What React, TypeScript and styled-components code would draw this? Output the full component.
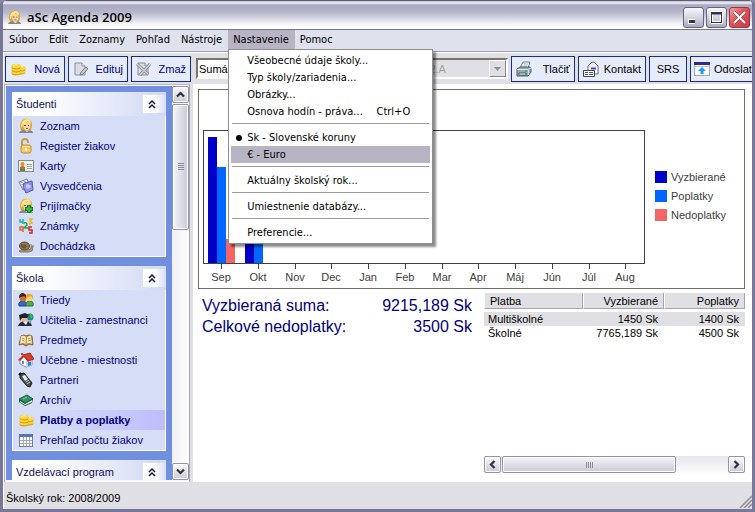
import React from "react";
import styled, { createGlobalStyle, css } from "styled-components";

const navy = "#00007b";
const face = "#e0dfe3";
const sans = '"Liberation Sans", Arial, sans-serif';
const menuFont = '"DejaVu Sans Condensed", "DejaVu Sans", sans-serif';

const GlobalStyle = createGlobalStyle`
  * { box-sizing: border-box; }
  html, body { margin: 0; height: 100%; }
  body { background: #8c8ca8; font: 11px/14px ${sans}; color: #000; overflow: hidden; }
  button, select { font: inherit; color: inherit; margin: 0; }
  svg { display: block; flex: none; }
`;

const Window = styled.div`
  display: flex;
  flex-direction: column;
  height: 100vh;
  border: solid #77779a;
  border-width: 0 3px 3px;
  border-radius: 6px 6px 0 0;
  background: ${face};
  box-shadow: inset 1px 0 #fff;
  overflow: hidden;
`;

const TitleBar = styled.header`
  display: flex;
  align-items: center;
  flex: none;
  height: 30px;
  margin: 0 -3px;
  padding: 4px 5px 0 7px;
  gap: 5px;
  border-top: 1px solid #5e5d75;
  border-bottom: 1px solid #74748f;
  background: linear-gradient(#b7b7cc 0, #f4f4f8 7%, #a9a9c3 14%, #b4b4cb 38%, #d6d6e2 62%, #fff 90%, #fff 100%);
`;

const Title = styled.h1`
  flex: 1;
  margin: 0;
  font: 600 13px/18px "Open Sans", ${menuFont};
`;

const CaptionButtons = styled.div`
  display: flex;
  gap: 2px;
`;

const CaptionButton = styled.button<{ $close?: boolean }>`
  display: grid;
  place-items: center;
  width: 21px;
  height: 21px;
  padding: 0;
  border: 1px solid ${(p) => (p.$close ? "#a5303c" : "#65657f")};
  border-radius: 3px;
  background: ${(p) =>
    p.$close
      ? "linear-gradient(135deg, #f0a0a0, #dc5558 45%, #c83a44)"
      : "linear-gradient(#f6f6fa, #d5d5e2 50%, #a9a9c2)"};
`;

const MenuBar = styled.nav`
  display: flex;
  flex: none;
  height: 22px;
  padding-left: 1px;
  border-bottom: 1px solid #9c9cab;
  background: #dfe1ec;
  font: 11px/17px ${menuFont};
`;

const MenuSlot = styled.div`
  position: relative;
`;

const MenuTitle = styled.button<{ $open?: boolean }>`
  height: 19px;
  padding: 0 6px 0 5px;
  border: 0;
  background: ${(p) => (p.$open ? "#b8b4c4" : "transparent")};
`;

const Popup = styled.div`
  position: absolute;
  z-index: 5;
  top: 19px;
  left: 0;
  width: 205px;
  padding: 2px;
  border: 1px solid #8e8d92;
  background: #fff;
  box-shadow: 3px 3px 2px rgba(0, 0, 0, 0.45);
`;

const PopupItem = styled.button<{ $active?: boolean }>`
  display: grid;
  grid-template-columns: 16px 1fr auto;
  align-items: center;
  width: 100%;
  height: 17px;
  padding: 0 20px 0 0;
  border: 0;
  background: ${(p) => (p.$active ? "#b8b4c4" : "transparent")};
  text-align: left;
  white-space: nowrap;
`;

const PopupRule = styled.hr`
  height: 1px;
  margin: 3px 1px 5px;
  border: 0;
  background: #9b9a9f;
`;

const Dot = styled.span`
  width: 6px;
  height: 6px;
  margin-left: 5px;
  border-radius: 50%;
  background: #000;
`;

const ToolBar = styled.div`
  display: flex;
  align-items: center;
  flex: none;
  height: 32px;
  padding-left: 2px;
  gap: 3px;
  border-top: 1px solid #fff;
  overflow: hidden;
`;

const ToolButton = styled.button<{ $w: number }>`
  display: flex;
  flex: none;
  align-items: center;
  justify-content: space-between;
  width: ${(p) => p.$w}px;
  height: 26px;
  padding: 0 4px;
  border: 1px solid #10308c;
  background: #e6ecfb;
  color: ${navy};
  white-space: nowrap;
`;

const DarkToolButton = styled(ToolButton)`
  color: #000;
`;

const TextOnlyButton = styled(DarkToolButton)`
  justify-content: center;
`;

const LastToolButton = styled(DarkToolButton)`
  padding: 0 0 0 3px;
  justify-content: flex-start;
  gap: 4px;
`;

const Combos = styled.div`
  display: flex;
  flex: none;
  width: 312px;
  margin-left: 2px;
  gap: 6px;
`;

const Combo = styled.select`
  flex: 1;
  min-width: 0;
  height: 21px;
  padding: 0 1px;
  border: 2px solid;
  border-color: #77756e #fff #fff #77756e;
  border-radius: 0;
  background: #fff;
  appearance: none;
  &:disabled {
    background: ${face};
    color: #a3a1a3;
    opacity: 1;
  }
`;

const ComboWrap = styled.label<{ $grow: number }>`
  position: relative;
  display: flex;
  flex: ${(p) => p.$grow} 0 0;
  min-width: 0;
`;

const ComboArrow = styled.span`
  position: absolute;
  top: 2px;
  right: 2px;
  display: grid;
  place-items: center;
  width: 17px;
  height: 17px;
  border: 1px solid;
  border-color: #fff #89878f #89878f #fff;
  background: ${face};
  pointer-events: none;
`;

const Body = styled.div`
  display: flex;
  flex: 1;
  min-height: 0;
`;

const Side = styled.aside`
  display: flex;
  flex: none;
  width: 190px;
  padding: 2px 1px 2px 3px;
  border-right: 3px solid ${face};
  background: #fafafc;
  box-shadow: inset 1px 0 #fff, inset 2px 0 #a8a8bb, inset -1px 0 #a8a8b5, inset 0 1px #b8b8c6;
`;

const Panels = styled.div`
  display: flex;
  flex: 1;
  flex-direction: column;
  gap: 9px;
  min-width: 0;
  padding: 6px 6px 0 6px;
  background: #7090df;
  overflow: hidden;
`;

const Panel = styled.section`
  flex: none;
  border: solid #fff;
  border-width: 0 1px 1px;
  background: #d6def7;
`;

const PanelHead = styled.h2`
  display: flex;
  align-items: center;
  justify-content: space-between;
  height: 24px;
  margin: 0 -1px;
  padding-left: 4px;
  background: linear-gradient(90deg, #fff 20%, #d0d9f5);
  color: #101058;
  font: 11px/14px ${sans};
`;

const Collapse = styled.button`
  display: grid;
  place-items: center;
  width: 23px;
  height: 18px;
  padding: 0 6px 0 0;
  border: 0;
  background: linear-gradient(90deg, #fff, #fff 50%, #d6def7);
`;

const NavList = styled.ul`
  margin: 0;
  padding: 0;
  list-style: none;
`;

const NavLink = styled.a<{ $current?: boolean }>`
  display: flex;
  align-items: center;
  gap: 6px;
  height: 20px;
  padding-left: 5px;
  color: ${navy};
  text-decoration: none;
  white-space: nowrap;
  ${(p) =>
    p.$current &&
    css`
      background: linear-gradient(90deg, #d6def7 15%, #bfbcff);
      font-weight: bold;
    `}
`;

const Scroll = styled.div<{ $across?: boolean }>`
  display: flex;
  flex-direction: ${(p) => (p.$across ? "row" : "column")};
  flex: none;
  gap: 1px;
  ${(p) => (p.$across ? "height: 17px;" : "width: 17px;")}
  background: ${(p) =>
    p.$across ? "linear-gradient(#e6e6ee, #fcfcfd)" : "linear-gradient(90deg, #f1f1f6, #fefefe)"};
`;

const scrollSkin = css`
  border: 1px solid #9292a8;
  border-radius: 2px;
  box-shadow: inset 0 0 0 1px #fff;
`;

const ScrollButton = styled.button`
  display: grid;
  place-items: center;
  flex: none;
  width: 17px;
  height: 17px;
  padding: 0;
  ${scrollSkin}
  background: linear-gradient(#fafafc, #c9c9da);
`;

const Thumb = styled.div<{ $across?: boolean; $share: number }>`
  display: grid;
  place-items: center;
  flex: ${(p) => p.$share} 0 0;
  ${scrollSkin}
  background: linear-gradient(${(p) => (p.$across ? "180deg" : "90deg")}, #f5f5f9, #c9c9da);
`;

const Track = styled.div<{ $share: number }>`
  flex: ${(p) => p.$share} 0 0;
`;

const Main = styled.main`
  display: flex;
  flex: 1;
  flex-direction: column;
  min-width: 0;
  padding: 5px 7px 9px 5px;
  background: #fff;
`;

const ChartPanel = styled.section`
  display: flex;
  flex: none;
  align-items: center;
  border: 1px solid #706f63;
`;

const Plot = styled.svg`
  flex: 1;
  min-width: 0;
  height: 198px;
  font: 11px ${sans};
`;

const Legend = styled.ul`
  display: grid;
  gap: 7px;
  flex: none;
  width: 89px;
  margin: 0;
  padding: 14px 0 0;
  color: #404040;
  list-style: none;
`;

const LegendRow = styled.li`
  display: flex;
  align-items: center;
  gap: 4px;
  height: 12px;
`;

const Swatch = styled.span<{ $color: string }>`
  width: 12px;
  height: 12px;
  background: ${(p) => p.$color};
`;

const Summary = styled.div`
  display: flex;
  flex: 1;
  gap: 12px;
  padding: 4px 0 0 4px;
`;

const Totals = styled.dl`
  display: grid;
  grid-template-columns: 1fr auto;
  align-content: start;
  flex: none;
  width: 270px;
  margin: 0;
  padding-top: 2px;
  color: ${navy};
  font-size: 16px;
  line-height: 21px;
`;

const TotalValue = styled.dd`
  margin: 0;
  text-align: right;
`;

const Payments = styled.div`
  display: flex;
  flex: 1;
  flex-direction: column;
  justify-content: space-between;
  min-width: 0;
`;

const PayTable = styled.table`
  width: 100%;
  border-collapse: separate;
  border-spacing: 0;
  table-layout: fixed;
`;

const HeadCell = styled.th<{ $right?: boolean; $w: string }>`
  width: ${(p) => p.$w};
  height: 16px;
  padding: 0 5px;
  border-right: 1px solid #a5a4aa;
  border-bottom: 1px solid #a5a4aa;
  border-left: 1px solid #fff;
  background: ${face};
  font-weight: normal;
  text-align: ${(p) => (p.$right ? "right" : "left")};
`;

const SpacerRow = styled.tr`
  height: 3px;
`;

const PayRow = styled.tr<{ $shade?: boolean }>`
  background: ${(p) => (p.$shade ? face : "#fff")};
`;

const Cell = styled.td<{ $right?: boolean }>`
  height: 14px;
  padding: 0 6px 0 4px;
  text-align: ${(p) => (p.$right ? "right" : "left")};
`;

const StatusBar = styled.footer`
  display: flex;
  align-items: end;
  justify-content: space-between;
  flex: none;
  height: 27px;
  padding: 0 0 1px 3px;
`;

const StatusText = styled.span`
  padding-bottom: 3px;
`;

const FaceArt = () => (
  <>
    <path d="M3 12Q1 8 3 4Q5 0 10 1Q14 2 14 7Q14 11 12 13H5Z" fill="#d9a835" />
    <path d="M5 5Q9 5 11 3Q13 7 12 10L9 13Q5 12 5 5Z" fill="#f9d3a4" />
    <path d="M3 8Q3 2 9 1Q13 1 13 6L10 3Q8 5 5 6L4 10Z" fill="#f9e67c" />
    <path d="M6 7.500H8M10 7.500H11" stroke="#4a5a88" />
    <path d="M8 10.500H10" stroke="#c45850" />
    <path d="M1 15Q2 12 6 12L9 14L12 12Q15 13 15 15Z" fill="#7f8796" />
  </>
);

const CoinsArt = () => (
  <>
    {[
      [11, 10],
      [11, 7],
      [6, 11],
      [6, 8],
      [6, 5],
    ].map(([x, y]) => (
      <g key={`${x}-${y}`}>
        <ellipse cx={x} cy={y + 1} rx="4.500" ry="2.500" fill="#d8a010" />
        <ellipse cx={x} cy={y} rx="4.500" ry="2.300" fill="#fcd63a" />
        <path d={`M${x - 3} ${y}Q${x} ${y - 2} ${x + 2} ${y - 1}`} stroke="#fff3a8" fill="none" />
      </g>
    ))}
  </>
);

const PageArt = () => (
  <>
    <path d="M2 2H9L12 5V14H2Z" fill="#dcdde2" stroke="#8c8d96" />
    <path d="M9 2V5H12" fill="#fff" stroke="#8c8d96" />
  </>
);

const art: Record<string, React.ReactNode> = {
  face: <FaceArt />,
  coins: <CoinsArt />,
  edit: (
    <>
      <PageArt />
      <path d="M7 14L8 11L13 6L15 8L10 13Z" fill="#c2c2c9" stroke="#85858e" />
    </>
  ),
  erase: (
    <>
      <PageArt />
      <path d="M1 3L12 13M14 3L4 14" stroke="#85868f" strokeWidth="3" />
      <path d="M1 3L12 13M14 3L4 14" stroke="#d0d1d8" strokeWidth="1.500" />
    </>
  ),
  lock: (
    <>
      <path d="M4 8V4Q4 1 7 1Q10 1 10 5" fill="none" stroke="#c99a3c" strokeWidth="2" />
      <rect x="3" y="7" width="10" height="8" rx="2" fill="#f9ca64" stroke="#cc8824" />
      <path d="M4 8.500H11" stroke="#ffe9a0" />
      <path d="M8 10V13" stroke="#fff" strokeWidth="2" />
    </>
  ),
  card: (
    <>
      <rect x=".5" y="2.500" width="15" height="11" fill="#f2f4f2" stroke="#828c86" />
      <circle cx="4.500" cy="6" r="2" fill="#e68b25" />
      <path d="M2 12V9Q4.500 7 7 9V12Z" fill="#d3622c" />
      <path d="M2 12H7" stroke="#3a9c48" strokeWidth="2" />
      <path d="M9 6.500H14M9 8.500H14M9 10.500H14" stroke="#9aa49e" />
    </>
  ),
  papers: (
    <>
      <path d="M1 4L9 1L12 8L5 12Z" fill="#fff" stroke="#777f98" />
      <path d="M2 5L8 3M3 7L6 6" stroke="#aaa" />
      <path d="M6 5L14 3L15 12L8 15L5 9Z" fill="#8e91ec" stroke="#5658a8" />
      <path d="M8 7Q10 5 11 7Q14 7 12 10L9 11Q7 9 8 7Z" fill="#c4c8ff" />
    </>
  ),
  enroll: (
    <>
      <FaceArt />
      <path d="M11 7V15M7 11H15" stroke="#177b22" strokeWidth="4" />
      <path d="M11 8V14M8 11H14" stroke="#3eba3b" strokeWidth="2" />
    </>
  ),
  marks: (
    <g fill="none" strokeWidth="1.500">
      <path d="M2 1V4H5M5 1V6" stroke="#18b4bd" />
      <path d="M11 1H14L12 3L14 5L11 6" stroke="#e8bc13" />
      <path d="M6 5Q9 4 9 7L6 10H10" stroke="#20a83b" />
      <path d="M5 14V9H2V12H5" stroke="#e56a20" />
      <path d="M14 9H11V12H14V15H11" stroke="#dd2222" />
    </g>
  ),
  snail: (
    <>
      <path d="M1 13Q4 10 9 12L13 11L13 8L15 9L14 13L11 14H2Z" fill="#a39785" stroke="#857b69" />
      <ellipse cx="6.500" cy="8" rx="5" ry="4" fill="#8d7550" stroke="#5c4d31" />
      <path d="M6 9Q5 7 7 7Q10 9 6 10Q2 9 4 6" fill="none" stroke="#54462d" />
      <path d="M13 8V6M15 9V7" stroke="#857b69" />
    </>
  ),
  people: (
    <>
      <path d="M1 14Q0 9 5 9Q9 9 8 14Z" fill="#3465cf" stroke="#1d3e91" />
      <path d="M8 14Q7 9 12 9Q16 9 15 14Z" fill="#48ad55" stroke="#28733a" />
      <circle cx="5" cy="6" r="3.500" fill="#ca7133" />
      <path d="M1 6Q1 1 5 1Q9 2 8 6L6 4L3 5Z" fill="#402016" />
      <circle cx="11.500" cy="6" r="3.300" fill="#ffd070" />
      <path d="M8 7Q7 1 12 2Q16 3 15 7L13 4L10 5Z" fill="#eea51d" />
    </>
  ),
  teacher: (
    <>
      <path d="M0 14Q2 9 7 9L12 9L14 14Z" fill="#252836" />
      <circle cx="12" cy="5" r="3.500" fill="#168d87" />
      <path d="M12 2L15 4L13 7" fill="#59bb48" />
      <circle cx="6.500" cy="7" r="3" fill="#e4b99b" />
      <path d="M1 3L7 1L11 3L9 6H4L2 9Z" fill="#20202a" />
      <path d="M5 10L8 13L10 9" fill="#fff" />
      <path d="M10 9L14 8L12 12" fill="#969cae" />
    </>
  ),
  book: (
    <>
      <path d="M1 13L3 4Q6 2 8 4Q11 2 14 4L15 13Q11 11 8 14Q5 11 1 13Z" fill="#b58745" stroke="#8a6636" />
      <path d="M3 4Q6 3 8 5L7.500 12Q5 10 2 12ZM9 5Q12 3 13 4L14 12Q11 10 8.500 12Z" fill="#f6e4b2" />
      <path d="M4 6L6.500 7M4 8L6.500 9M10 7L12.500 6M10 9L13 8" stroke="#ba9a61" />
    </>
  ),
  house: (
    <>
      <path d="M2 8L6 4L14 8V13L8 15L2 12Z" fill="#f9fbff" stroke="#7b93bc" />
      <path d="M8 9L14 8V13L8 15Z" fill="#bcd3f5" />
      <path d="M5 3L12 1L16 7L10 9Z" fill="#dc3c26" stroke="#a62c1c" />
      <path d="M5 3L0 8L2 9L6 5L10 10L11 8Z" fill="#c42e1d" />
      <path d="M10 10H13V13L10 14Z" fill="#387ac8" />
      <path d="M4 9H6V12H4Z" fill="#5187ce" />
      <path d="M3 3V1H5V3" fill="#b0422e" />
    </>
  ),
  phone: (
    <>
      <path d="M2 2L6 1L14 11L12 15L9 14L2 6Z" fill="#4b4e4d" stroke="#161a18" />
      <path d="M4 4L7 3L10 7L7 9Z" fill="#e5ece8" />
      <path d="M8 10L11 8M9 12L12 10" stroke="#d0d4d0" />
      <path d="M1 3L3 1" stroke="#111" strokeWidth="2" />
    </>
  ),
  archive: (
    <>
      <path d="M1 7L9 3L15 7L14 11L7 14L1 10Z" fill="#145c40" />
      <path d="M2 9L7 12L14 8V10L7 13L2 10Z" fill="#f4f4e9" />
      <path d="M1 7L9 3L15 7L7 11Z" fill="#329267" stroke="#186446" />
      <path d="M5 7L9 5" stroke="#8fd1ab" />
    </>
  ),
  calendar: (
    <>
      <rect x="1.500" y="2.500" width="13" height="12" fill="#fff" stroke="#727c9e" />
      <path d="M1 3.500H15" stroke="#5871b3" strokeWidth="3" />
      <path d="M2 8.500H14M2 11.500H14M5.500 5V14M8.500 5V14M11.500 5V14" stroke="#a0a7bb" />
    </>
  ),
  printer: (
    <>
      <path d="M4 7L7 1H14L12 7Z" fill="#fff" stroke="#6c7e8d" />
      <path d="M8 3H12M7 5H11" stroke="#8fb6d2" />
      <path d="M1 8L4 6H14L15 8V11L12 15H1Z" fill="#9aa8b3" stroke="#4b5660" />
      <path d="M1 8.500H12L15 7M12.500 9V14" fill="none" stroke="#dbe3e8" />
      <path d="M3 12H10V14H3Z" fill="#fff" stroke="#51606e" />
      <path d="M9 10H11" stroke="#27bf64" strokeWidth="2" />
    </>
  ),
  contact: (
    <>
      <path d="M5 13V5L8 2Q10 0 12 2L15 5V13Z" fill="#fff" stroke="#656572" />
      <path d="M6 5L9 2H11L14 5V7H6Z" fill="#f6ebe7" />
      <path d="M8 7.500H13" stroke="#3f51b6" strokeWidth="2" />
      <path d="M.5 9.500H11.500V15.500H.5Z" fill="#fff" stroke="#40434b" />
      <path d="M2 11.500H5M6 11.500H10M2 13.500H5M6 13.500H10" stroke="#52555d" />
    </>
  ),
  upload: (
    <>
      <rect x=".5" y="1.500" width="15" height="13" fill="#fff" stroke="#a3a9bd" />
      <path d="M0 2.500H16" stroke="#312a94" strokeWidth="3" />
      <path d="M1 5.500H15" stroke="#bbc1cf" />
      <path d="M8 6L12 10H9.500V13H6.500V10H4Z" fill="#159cf2" />
    </>
  ),
};

const Icon = ({ name, size = 16 }: { name: string; size?: number }) => (
  <svg width={size} height={size} viewBox="0 0 16 16" aria-hidden="true">
    {art[name]}
  </svg>
);

const Arrow = ({ turn = 0 }: { turn?: number }) => (
  <svg width="9" height="9" viewBox="0 0 9 9" aria-hidden="true">
    <path d="M1 6.500L4.500 3L8 6.500" transform={`rotate(${turn} 4.5 4.5)`} fill="none" stroke="#303038" strokeWidth="2.200" />
  </svg>
);

const Grip = ({ turn = 0 }: { turn?: number }) => (
  <svg width="8" height="8" viewBox="0 0 8 8" aria-hidden="true">
    <path d="M1 .5H7M1 2.500H7M1 4.500H7M1 6.500H7" transform={`rotate(${turn} 4 4)`} stroke="#8b8b9e" />
  </svg>
);

const panels = [
  {
    title: "Študenti",
    items: [
      ["face", "Zoznam"],
      ["lock", "Register žiakov"],
      ["card", "Karty"],
      ["papers", "Vysvedčenia"],
      ["enroll", "Prijímačky"],
      ["marks", "Známky"],
      ["snail", "Dochádzka"],
    ],
  },
  {
    title: "Škola",
    items: [
      ["people", "Triedy"],
      ["teacher", "Učitelia - zamestnanci"],
      ["book", "Predmety"],
      ["house", "Učebne - miestnosti"],
      ["phone", "Partneri"],
      ["archive", "Archív"],
      ["coins", "Platby a poplatky"],
      ["calendar", "Prehľad počtu žiakov"],
    ],
  },
  { title: "Vzdelávací program", items: [] },
];

const months = ["Sep", "Okt", "Nov", "Dec", "Jan", "Feb", "Mar", "Apr", "Máj", "Jún", "Júl", "Aug"];
const series = [
  { name: "Vyzbierané", color: "#0000c8", values: [126, 60] },
  { name: "Poplatky", color: "#0066ff", values: [96, 60] },
  { name: "Nedoplatky", color: "#f26666", values: [24, 0] },
];
const monthX = (i: number) => 22 + Math.round(i * 36.75);

const Chart = () => (
  <ChartPanel>
    <Plot viewBox="0 0 456 198" preserveAspectRatio="xMinYMid meet" role="img" aria-label="Platby podľa mesiacov">
      <rect x="4.500" y="40.500" width="441" height="133" fill="none" stroke="#404040" />
      {series.map((s, n) =>
        s.values.map((v, i) => (
          <rect key={`${s.name}${i}`} x={monthX(i) - 13 + n * 9} y={173 - v} width="9" height={v} fill={s.color} />
        ))
      )}
      {months.map((m, i) => (
        <g key={m}>
          <path d={`M${monthX(i) + 0.5} 174V179`} stroke="#404040" />
          <text x={monthX(i)} y="191" textAnchor="middle" fill="#404040">
            {m}
          </text>
        </g>
      ))}
    </Plot>
    <Legend>
      {series.map((s) => (
        <LegendRow key={s.name}>
          <Swatch $color={s.color} />
          {s.name}
        </LegendRow>
      ))}
    </Legend>
  </ChartPanel>
);

const SettingsMenu = () => (
  <Popup role="menu">
    <PopupItem role="menuitem"><span />Všeobecné údaje školy...</PopupItem>
    <PopupItem role="menuitem"><span />Typ školy/zariadenia...</PopupItem>
    <PopupItem role="menuitem"><span />Obrázky...</PopupItem>
    <PopupItem role="menuitem"><span />Osnova hodín - práva...<span>Ctrl+O</span></PopupItem>
    <PopupRule />
    <PopupItem role="menuitemradio" aria-checked="true"><Dot />Sk - Slovenské koruny</PopupItem>
    <PopupItem role="menuitemradio" aria-checked="false" $active><span />€ - Euro</PopupItem>
    <PopupRule />
    <PopupItem role="menuitem"><span />Aktuálny školský rok...</PopupItem>
    <PopupRule />
    <PopupItem role="menuitem"><span />Umiestnenie databázy...</PopupItem>
    <PopupRule />
    <PopupItem role="menuitem"><span />Preferencie...</PopupItem>
  </Popup>
);

export default function App() {
  return (
    <>
      <GlobalStyle />
      <Window>
        <TitleBar>
          <Icon name="face" size={15} />
          <Title>aSc Agenda 2009</Title>
          <CaptionButtons>
            <CaptionButton aria-label="Minimalizovať">
              <svg width="13" height="13"><path d="M1 10.500H8" stroke="#fff" strokeWidth="5" /><path d="M2 10.500H8" stroke="#32324a" strokeWidth="3" /></svg>
            </CaptionButton>
            <CaptionButton aria-label="Maximalizovať">
              <svg width="13" height="13"><rect x="1.500" y="1.500" width="10" height="10" fill="none" stroke="#fff" strokeWidth="3" /><rect x="1.500" y="1.500" width="10" height="10" fill="none" stroke="#32324a" /><path d="M1 2.500H12" stroke="#32324a" strokeWidth="2" /></svg>
            </CaptionButton>
            <CaptionButton $close aria-label="Zavrieť">
              <svg width="13" height="13"><path d="M1 1L12 12M12 1L1 12" stroke="#7e303c" strokeWidth="3" /><path d="M1 1L12 12M12 1L1 12" stroke="#fff" strokeWidth="2" /></svg>
            </CaptionButton>
          </CaptionButtons>
        </TitleBar>
        <MenuBar>
          {["Súbor", "Edit", "Zoznamy", "Pohľad", "Nástroje", "Nastavenie", "Pomoc"].map((m) => (
            <MenuSlot key={m}>
              <MenuTitle $open={m === "Nastavenie"}>{m}</MenuTitle>
              {m === "Nastavenie" && <SettingsMenu />}
            </MenuSlot>
          ))}
        </MenuBar>
        <ToolBar>
          <ToolButton $w={60}><Icon name="coins" />Nová</ToolButton>
          <ToolButton $w={60}><Icon name="edit" />Edituj</ToolButton>
          <ToolButton $w={60}><Icon name="erase" />Zmaž</ToolButton>
          <Combos>
            <ComboWrap $grow={11}>
              <Combo aria-label="Zobrazenie"><option>Sumárne</option></Combo>
              <ComboArrow><svg width="7" height="4"><path d="M0 0H7L3.500 4Z" fill="#000" /></svg></ComboArrow>
            </ComboWrap>
            <ComboWrap $grow={4}>
              <Combo aria-label="Trieda" disabled><option>2.A</option></Combo>
              <ComboArrow><svg width="7" height="4"><path d="M0 0H7L3.500 4Z" fill="#918f96" /></svg></ComboArrow>
            </ComboWrap>
          </Combos>
          <DarkToolButton $w={64}><Icon name="printer" />Tlačiť</DarkToolButton>
          <DarkToolButton $w={68}><Icon name="contact" />Kontakt</DarkToolButton>
          <TextOnlyButton $w={38}>SRS</TextOnlyButton>
          <LastToolButton $w={72}><Icon name="upload" />Odoslať</LastToolButton>
        </ToolBar>
        <Body>
          <Side>
            <Panels>
              {panels.map((p) => (
                <Panel key={p.title}>
                  <PanelHead>
                    {p.title}
                    <Collapse aria-label={`Zbaliť ${p.title}`}>
                      <svg width="8" height="9"><path d="M1 4L4 1L7 4M1 8L4 5L7 8" fill="none" stroke="#101058" strokeWidth="1.500" /></svg>
                    </Collapse>
                  </PanelHead>
                  <NavList>
                    {p.items.map(([icon, label]) => (
                      <li key={label}>
                        <NavLink href="#" $current={label === "Platby a poplatky"}>
                          <Icon name={icon} />
                          {label}
                        </NavLink>
                      </li>
                    ))}
                  </NavList>
                </Panel>
              ))}
            </Panels>
            <Scroll>
              <ScrollButton aria-label="Nahor"><Arrow /></ScrollButton>
              <Thumb $share={125}><Grip /></Thumb>
              <Track $share={233} />
              <ScrollButton aria-label="Nadol"><Arrow turn={180} /></ScrollButton>
            </Scroll>
          </Side>
          <Main>
            <Chart />
            <Summary>
              <Totals>
                <dt>Vyzbieraná suma:</dt>
                <TotalValue>9215,189 Sk</TotalValue>
                <dt>Celkové nedoplatky:</dt>
                <TotalValue>3500 Sk</TotalValue>
              </Totals>
              <Payments>
                <PayTable>
                  <thead>
                    <tr>
                      <HeadCell $w="38%">Platba</HeadCell>
                      <HeadCell $w="31%" $right>Vyzbierané</HeadCell>
                      <HeadCell $w="31%" $right>Poplatky</HeadCell>
                    </tr>
                  </thead>
                  <tbody>
                    <SpacerRow />
                    <PayRow $shade>
                      <Cell>Multiškolné</Cell>
                      <Cell $right>1450 Sk</Cell>
                      <Cell $right>1400 Sk</Cell>
                    </PayRow>
                    <PayRow>
                      <Cell>Školné</Cell>
                      <Cell $right>7765,189 Sk</Cell>
                      <Cell $right>4500 Sk</Cell>
                    </PayRow>
                  </tbody>
                </PayTable>
                <Scroll $across>
                  <ScrollButton aria-label="Doľava"><Arrow turn={270} /></ScrollButton>
                  <Thumb $across $share={174}><Grip turn={90} /></Thumb>
                  <Track $share={51} />
                  <ScrollButton aria-label="Doprava"><Arrow turn={90} /></ScrollButton>
                </Scroll>
              </Payments>
            </Summary>
          </Main>
        </Body>
        <StatusBar>
          <StatusText>Školský rok: 2008/2009</StatusText>
          <svg width="13" height="13"><path d="M1 13L13 1M5 13L13 5M9 13L13 9" stroke="#8e8d96" strokeWidth="1.500" /></svg>
        </StatusBar>
      </Window>
    </>
  );
}
